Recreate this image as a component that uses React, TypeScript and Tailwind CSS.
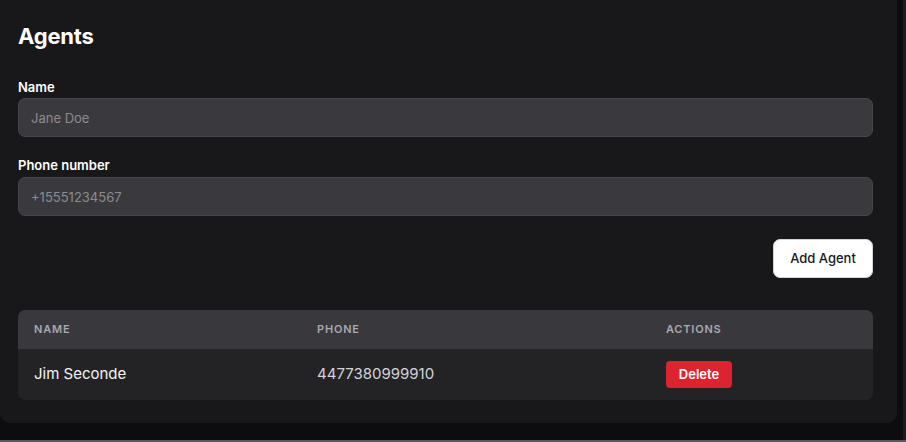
const agents = [{ name: "Jim Seconde", phone: "4477380999910" }];

export default function App() {
  return (
    <div
      className="flex h-[442px] w-[906px] flex-col bg-[#0d0d0f] text-white"
      style={{ fontFamily: "Inter, 'Noto Sans', sans-serif" }}
    >
      <div className="flex flex-1">
        <main className="h-[423px] w-[897px] rounded-b-[10px] bg-[#18181b] pl-[18px] pr-[24px] pt-[20px]">
          <h1 className="text-[22px] font-bold leading-8 tracking-[-0.2px]">Agents</h1>

          <label className="mt-[27px] block text-[13px] font-semibold leading-4">Name</label>
          <input
            placeholder="Jane Doe"
            className="mt-[3px] block h-[39px] w-full rounded-[7px] border border-[#46464b] bg-[#3a3a3e] px-[12px] text-[13px] text-white outline-none placeholder:text-[#8b8b90]"
          />

          <label className="mt-[20px] block text-[13px] font-semibold leading-4">Phone number</label>
          <input
            placeholder="+15551234567"
            className="mt-[4px] block h-[39px] w-full rounded-[7px] border border-[#46464b] bg-[#3a3a3e] px-[12px] text-[13px] text-white outline-none placeholder:text-[#8b8b90]"
          />

          <div className="mt-[23px] flex justify-end">
            <button className="h-[39px] w-[100px] rounded-[7px] border border-[#d4d4d8] bg-white text-[13px] font-medium text-[#18181b]">
              Add Agent
            </button>
          </div>

          <div className="mt-[32px] overflow-hidden rounded-[7px] bg-[#232326]">
            <div className="grid h-[39px] grid-cols-[283px_350px_1fr] items-center bg-[#38383d] text-[11px] font-semibold tracking-[0.8px] text-[#a8a8ae]">
              <span className="pl-[16px]">NAME</span>
              <span className="pl-[16px]">PHONE</span>
              <span className="pl-[15px]">ACTIONS</span>
            </div>
            {agents.map((a) => (
              <div key={a.phone} className="grid h-[51px] grid-cols-[283px_350px_1fr] items-center">
                <span className="pl-[16px] text-[15px] text-[#f4f4f5]">{a.name}</span>
                <span className="pl-[16px] text-[15px] text-[#d4d4d8]">{a.phone}</span>
                <span className="pl-[15px]">
                  <button className="h-[27px] w-[66px] rounded-[4px] bg-[#dc2430] text-[13px] font-semibold text-white">
                    Delete
                  </button>
                </span>
              </div>
            ))}
          </div>
        </main>
        <div className="flex-1" />
        <div className="w-[3px] bg-[#1c1c1f]" />
      </div>
      <div className="h-[2px] bg-[#5a5a5e]" />
    </div>
  );
}
